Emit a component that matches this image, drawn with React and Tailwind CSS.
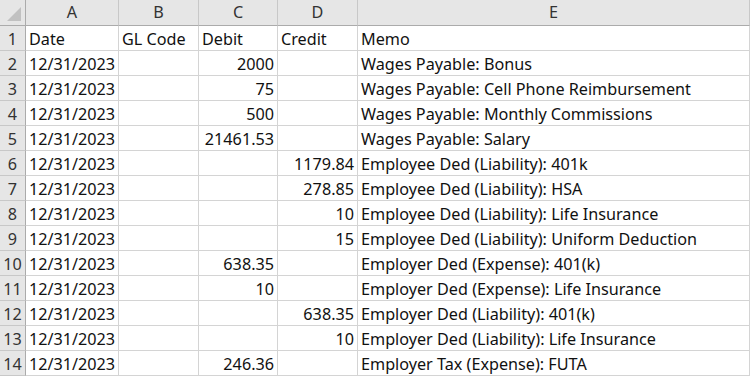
const rows = [
  ['Date', 'GL Code', 'Debit', 'Credit', 'Memo', true],
  ['12/31/2023', '', '2000', '', 'Wages Payable: Bonus'],
  ['12/31/2023', '', '75', '', 'Wages Payable: Cell Phone Reimbursement'],
  ['12/31/2023', '', '500', '', 'Wages Payable: Monthly Commissions'],
  ['12/31/2023', '', '21461.53', '', 'Wages Payable: Salary'],
  ['12/31/2023', '', '', '1179.84', 'Employee Ded (Liability): 401k'],
  ['12/31/2023', '', '', '278.85', 'Employee Ded (Liability): HSA'],
  ['12/31/2023', '', '', '10', 'Employee Ded (Liability): Life Insurance'],
  ['12/31/2023', '', '', '15', 'Employee Ded (Liability): Uniform Deduction'],
  ['12/31/2023', '', '638.35', '', 'Employer Ded (Expense): 401(k)'],
  ['12/31/2023', '', '10', '', 'Employer Ded (Expense): Life Insurance'],
  ['12/31/2023', '', '', '638.35', 'Employer Ded (Liability): 401(k)'],
  ['12/31/2023', '', '', '10', 'Employer Ded (Liability): Life Insurance'],
  ['12/31/2023', '', '246.36', '', 'Employer Tax (Expense): FUTA'],
]

const cols = 'grid grid-cols-[26px_93px_80px_79px_80px_1fr]'

function Cell({ children, right }) {
  return (
    <div className={`h-[25px] border-r border-b border-[#d4d4d4] px-[3px] flex items-end pb-[3px] whitespace-nowrap overflow-hidden ${right ? 'justify-end' : ''}`}>
      {children}
    </div>
  )
}

export default function App() {
  return (
    <div className="w-[750px] h-[376px] overflow-hidden bg-white text-[#111] text-[16.2px] leading-none" style={{ fontFamily: '"Noto Sans", sans-serif' }}>
      <div className={`${cols} h-[26px] bg-[#e6e6e6] text-[#333]`}>
        <div className="relative border-r border-b border-[#ababab]">
          <svg className="absolute right-[4px] bottom-[4px]" width="14" height="14" viewBox="0 0 14 14">
            <polygon points="14,0 14,14 0,14" fill="#c1c1c1" />
          </svg>
        </div>
        {['A', 'B', 'C', 'D', 'E'].map(l => (
          <div key={l} className="flex items-center justify-center border-r border-b border-[#ababab] border-r-[#c8c8c8]">{l}</div>
        ))}
      </div>
      {rows.map((r, i) => (
        <div key={i} className={cols}>
          <div className="h-[25px] bg-[#e6e6e6] border-r border-[#ababab] border-b border-b-[#c8c8c8] flex items-end justify-center pb-[3px] text-[#333]">{i + 1}</div>
          <Cell right={!r[5]}>{r[0]}</Cell>
          <Cell>{r[1]}</Cell>
          <Cell right={!r[5]}>{r[2]}</Cell>
          <Cell right={!r[5]}>{r[3]}</Cell>
          <Cell>{r[4]}</Cell>
        </div>
      ))}
    </div>
  )
}
